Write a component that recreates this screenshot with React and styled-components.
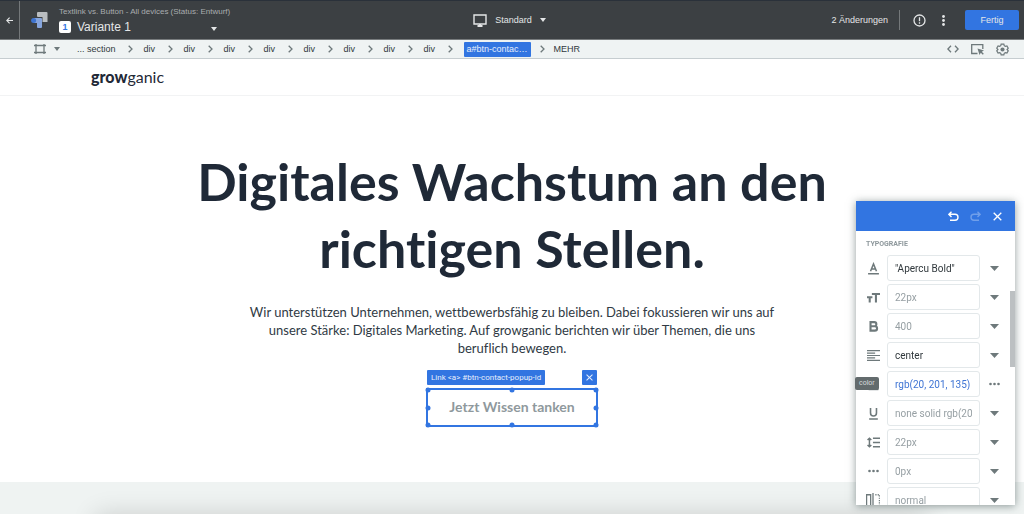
import React from 'react';
import styled, { createGlobalStyle } from 'styled-components';

const blue = '#3275e1';
const dark = '#3c4043';
const ink = '#1f2937';
const grey = '#6e797b';

const GlobalStyle = createGlobalStyle`
	* {
		box-sizing: border-box;
	}
	body {
		margin: 0;
		background: white;
		font-family: "Liberation Sans", Arial, sans-serif;
	}
	button, input {
		font: inherit;
		margin: 0;
	}
	button {
		border: 0;
		padding: 0;
		background: none;
		color: inherit;
		cursor: pointer;
	}
	svg {
		display: block;
		flex: none;
	}
`;

const Page = styled.div`
	display: flex;
	flex-direction: column;
	height: 100vh;
	overflow: hidden;
`;

const TopBar = styled.header`
	display: flex;
	flex: none;
	align-items: stretch;
	height: 40px;
	background: ${dark};
	border-top: 1px solid #2a313a;
	border-bottom: 1px solid #777b7d;
	color: #e4e6e7;
	font-size: 9px;
`;

const Back = styled.button`
	display: flex;
	align-items: center;
	justify-content: center;
	width: 20px;
	height: 100%;
	border-right: 1px solid #74787a;
`;

const TopSide = styled.div`
	display: flex;
	flex: 1;
	align-items: center;
	justify-content: ${({ end }) => end ? 'flex-end' : 'flex-start'};
	padding-right: ${({ end }) => end ? 5 : 0}px;
`;

const Brand = styled.div`
	margin: 0 11px;
`;

const Experiment = styled.div`
	width: 160px;
	padding-top: 3px;
`;

const ExperimentName = styled.div`
	font-size: 8px;
	line-height: 10px;
	color: #a9adaf;
	white-space: nowrap;
`;

const Variant = styled.button`
	display: flex;
	align-items: center;
	width: 100%;
	height: 19px;
	font-size: 12px;

	svg {
		margin: 4px 2px 0 auto;
	}
`;

const VariantNumber = styled.span`
	width: 12px;
	margin-right: 6px;
	border-radius: 2px;
	background: white;
	color: ${blue};
	font-size: 9px;
	font-weight: bold;
	line-height: 12px;
	text-align: center;
`;

const Device = styled.button`
	display: flex;
	align-items: center;
	gap: 8px;
`;

const Changes = styled.span`
	padding-right: 11px;
	margin-right: 13px;
	border-right: 1px solid #74787a;
	line-height: 20px;
`;

const IconButton = styled.button`
	display: flex;
	align-items: center;
	justify-content: center;
	width: ${({ size }) => size || 13}px;
	height: ${({ size }) => size || 13}px;
	opacity: ${({ disabled }) => disabled ? 0.3 : 1};
`;

const TopIcons = styled.div`
	display: flex;
	gap: 11px;
	margin-right: 15px;
`;

const Done = styled.button`
	width: 54px;
	height: 20px;
	border-radius: 2px;
	background: ${blue};
`;

const PathBar = styled.nav`
	display: flex;
	flex: none;
	align-items: center;
	height: 19px;
	padding: 0 15px 0 34px;
	background: #eff3f3;
	border-bottom: 1px solid #c6cdd0;
	color: ${grey};
`;

const Picker = styled.button`
	display: flex;
	align-items: center;
	gap: 8px;
	margin-right: 17px;
`;

const Crumbs = styled.ol`
	display: flex;
	flex: 1;
	align-items: center;
	margin: 0;
	padding: 0;
	list-style: none;
	font-size: 9px;
	line-height: 15px;
	color: #30383c;
`;

const Crumb = styled.li`
	display: flex;
	align-items: center;

	svg {
		margin: ${({ tight }) => tight ? '0 9px' : '0 11px 0 12px'};
	}
`;

const CrumbLink = styled.a`
	min-width: 12px;
	color: ${({ current }) => current ? '#e6eefc' : 'inherit'};
	background: ${({ current }) => current ? blue : 'none'};
	padding: 0 ${({ current }) => current ? 3 : 0}px;
	border-radius: 1px;
	text-decoration: none;
	white-space: nowrap;
`;

const PathTools = styled.div`
	display: flex;
	align-items: center;
	gap: 12px;
`;

const SiteHeader = styled.div`
	flex: none;
	height: 37px;
	padding-left: 91px;
	border-bottom: 1px solid #f2f3f4;
	font-family: Lato, sans-serif;
	font-size: 16px;
	line-height: 35px;
	color: ${ink};

	b {
		font-weight: 900;
	}
	a {
		color: inherit;
		text-decoration: none;
	}
`;

const Hero = styled.main`
	display: flex;
	flex: none;
	flex-direction: column;
	align-items: center;
	padding: 52px 0 56px;
	font-family: Lato, sans-serif;
	font-variant-ligatures: none;
	color: ${ink};
	text-align: center;
`;

const Title = styled.h1`
	max-width: 700px;
	margin: 0 0 21px;
	font-size: 52px;
	font-weight: 700;
	line-height: 67px;
`;

const Intro = styled.p`
	max-width: 534px;
	margin: 0 0 32px;
	font-size: 13px;
	line-height: 18px;
	color: #303a44;
`;

const Selection = styled.div`
	position: relative;
	width: 170px;
	height: 37px;
	border: 1px solid ${blue};
	outline: 1px solid ${blue};
`;

const SelectedLink = styled.a`
	display: block;
	font-size: 14px;
	font-weight: 700;
	line-height: 33px;
	color: #8f999d;
	text-decoration: none;
`;

const Handle = styled.i`
	position: absolute;
	left: ${({ x }) => x}%;
	top: ${({ y }) => y}%;
	width: 5px;
	height: 5px;
	border-radius: 50%;
	background: ${blue};
	transform: translate(-50%, -50%);
`;

const SelectionBar = styled.div`
	position: absolute;
	left: -1px;
	right: -1px;
	bottom: 40px;
	display: flex;
	justify-content: space-between;
	font-family: Roboto, sans-serif;
	font-size: 8px;
	line-height: 15px;
	color: #e6eefc;
`;

const SelectionTag = styled.span`
	padding: 0 4px;
	border-radius: 1px;
	background: ${blue};
	white-space: nowrap;
`;

const Deselect = styled(IconButton)`
	border-radius: 1px;
	background: ${blue};
`;

const NextSection = styled.section`
	flex: 1;
	padding: 33px 96px 0;
	overflow: hidden;
	background: #eff3f2;
`;

const NextCard = styled.div`
	height: 200px;
	background: white;
	box-shadow: 0 0 24px rgba(0, 0, 0, 0.16);
`;

const Panel = styled.aside`
	position: fixed;
	top: 201px;
	right: 9px;
	bottom: 9px;
	width: 159px;
	display: flex;
	flex-direction: column;
	background: white;
	box-shadow: 0 1px 8px rgba(40, 60, 60, 0.5);
	font-family: Roboto, sans-serif;
`;

const PanelHead = styled.div`
	display: flex;
	flex: none;
	align-items: center;
	justify-content: flex-end;
	gap: 9px;
	height: 30px;
	padding-right: 11px;
	background: ${blue};
	color: white;
`;

const PanelBody = styled.div`
	position: relative;
	flex: 1;
	overflow: hidden;
	padding: 8px 10px 0;
`;

const PanelTitle = styled.h2`
	margin: 0 0 6px;
	font-size: 7px;
	font-weight: 700;
	line-height: 10px;
	color: #8e989c;
`;

const Fields = styled.div`
	display: grid;
	gap: 3px;
`;

const Field = styled.div`
	display: grid;
	grid-template-columns: 14px 93px 15px;
	column-gap: 7px;
	align-items: center;
	justify-items: center;
	height: 26px;
	color: ${grey};
`;

const FieldInput = styled.input`
	width: 100%;
	height: 26px;
	padding: 0 7px;
	border: 1px solid #e3e8ea;
	border-radius: 3px;
	outline: 0;
	font-size: 10px;
	color: ${({ tone }) => tone || '#969fa3'};
`;

const Scrollbar = styled.div`
	position: absolute;
	top: 60px;
	right: 0;
	width: 5px;
	height: 76px;
	background: #bcc0c2;
`;

const Tooltip = styled.div`
	position: absolute;
	left: -1px;
	top: 176px;
	padding: 0 4px;
	border-radius: 2px;
	background: #636b6d;
	color: #d5d9da;
	font-size: 7px;
	line-height: 13px;
`;

const Icon = ({ w = 13, h = w, box = '0 0 24 24', stroke = 2, children }) => (
	<svg width={w} height={h} viewBox={box} fill="none" stroke="currentColor" strokeWidth={stroke} aria-hidden="true">
		{children}
	</svg>
);

const Caret = ({ w = 9, h = 5 }) => (
	<svg width={w} height={h} viewBox="0 0 8 4" preserveAspectRatio="none" aria-hidden="true">
		<path d="M0 0h8L4 4z" fill="currentColor" />
	</svg>
);

const Chevron = () => (
	<Icon w={5} h={8} box="0 0 5 8" stroke={1.3}><path d="M.7.7 4 4 .7 7.3" stroke={grey} /></Icon>
);

const Close = ({ w = 9 }) => (
	<Icon w={w} box="0 0 9 9" stroke={1.3}><path d="m.7.7 7.6 7.6M8.3.7.7 8.3" /></Icon>
);

const Dots = () => (
	<svg width="11" height="4" viewBox="0 0 11 4" fill="currentColor" aria-hidden="true">
		<circle cx="1.5" cy="2" r="1.3" />
		<circle cx="5.5" cy="2" r="1.3" />
		<circle cx="9.5" cy="2" r="1.3" />
	</svg>
);

const icons = {
	family: <Icon stroke={2.8}><path d="M2 21.5h20M6.5 17 12 3.5 17.5 17M8.5 13h7" /></Icon>,
	size: <Icon stroke={3.8}><path d="M9 5.5h15M16.5 5.5V21M0 11.5h10M5 11.5V21" /></Icon>,
	weight: <Icon stroke={3.9}><path d="M6.5 4h7a3.7 3.7 0 0 1 0 7.5h-7zM6.5 11.5h8a4 4 0 0 1 0 8.2h-8z" /></Icon>,
	align: <Icon stroke={2.2}><path d="M0 3h24M0 7.5h15M0 12h24M0 16.5h15M0 21h24" /></Icon>,
	color: <Icon stroke={3}><path d="M3 21h18" /></Icon>,
	decoration: <Icon stroke={2.9}><path d="M4 22h16M6.5 2v9a5.5 5.5 0 0 0 11 0V2" /></Icon>,
	lineHeight: <Icon stroke={2.7}><path d="M11 4h13M11 12h13M11 20h13M4.5 4v16M1 7.5 4.5 4 8 7.5M1 16.5 4.5 20 8 16.5" /></Icon>,
	spacing: <Dots />,
	direction: (
		<Icon w={14} stroke={2.2}>
			<path d="M1 23V3h7v20M12 0v24" />
			<path d="M16 3h7v20" strokeDasharray="2 2" />
		</Icon>
	),
};

const fields = [
	{ icon: 'family', label: 'font-family', value: '"Apercu Bold"', tone: '#30383c' },
	{ icon: 'size', label: 'font-size', value: '22px' },
	{ icon: 'weight', label: 'font-weight', value: '400' },
	{ icon: 'align', label: 'text-align', value: 'center', tone: '#30383c' },
	{ icon: 'color', label: 'color', value: 'rgb(20, 201, 135)', tone: '#3f74d4', more: true },
	{ icon: 'decoration', label: 'text-decoration', value: 'none solid rgb(20, 201, 135)' },
	{ icon: 'lineHeight', label: 'line-height', value: '22px' },
	{ icon: 'spacing', label: 'letter-spacing', value: '0px' },
	{ icon: 'direction', label: 'white-space', value: 'normal' },
];

const crumbs = ['... section', 'div', 'div', 'div', 'div', 'div', 'div', 'div', 'div', 'a#btn-contac…', 'MEHR'];
const current = 9;

const handles = [[0, 0], [50, 0], [100, 0], [0, 50], [100, 50], [0, 100], [50, 100], [100, 100]];

const EditorBar = () => (
	<TopBar>
		<TopSide>
			<Back aria-label="Zurück">
				<Icon w={7} box="0 0 7 7" stroke={1.1}><path d="M7 3.5H1M3.6.7.8 3.5l2.8 2.8" /></Icon>
			</Back>
			<Brand>
				<svg width="17" height="17" viewBox="0 0 17 17" aria-hidden="true">
					<path d="M7 0h8.5a1 1 0 0 1 1 1v9h-5V5H7a1 1 0 0 1-1-1V1a1 1 0 0 1 1-1z" fill="#b9bdc0" />
					<path d="M2.5 6H10a1 1 0 0 1 1 1v8a1 1 0 0 1-1 1H7a1 1 0 0 1-1-1v-4H2.5z" fill="#86a5dd" />
					<circle cx="2.6" cy="8.5" r="2.5" fill="#3f74cf" />
				</svg>
			</Brand>
			<Experiment>
				<ExperimentName>Textlink vs. Button - All devices (Status: Entwurf)</ExperimentName>
				<Variant>
					<VariantNumber>1</VariantNumber>
					Variante 1
					<Caret w={6} h={4} />
				</Variant>
			</Experiment>
		</TopSide>
		<Device>
			<Icon w={14} h={13} box="0 0 14 13" stroke={1.4}>
				<path d="M1 1h12v9H1z" />
				<path d="M4.5 12h5M7 10v2" strokeWidth="2" />
			</Icon>
			Standard
			<Caret w={6} h={4} />
		</Device>
		<TopSide end>
			<Changes>2 Änderungen</Changes>
			<TopIcons>
				<IconButton aria-label="Hinweise">
					<Icon w={13} box="0 0 13 13" stroke={1.3}>
						<circle cx="6.5" cy="6.5" r="5.5" />
						<path d="M6.5 3.3v3.9M6.5 8.3v1.4" />
					</Icon>
				</IconButton>
				<IconButton aria-label="Mehr">
					<svg width="3" height="11" viewBox="0 0 3 11" fill="currentColor" aria-hidden="true">
						<circle cx="1.5" cy="1.5" r="1.4" />
						<circle cx="1.5" cy="5.5" r="1.4" />
						<circle cx="1.5" cy="9.5" r="1.4" />
					</svg>
				</IconButton>
			</TopIcons>
			<Done>Fertig</Done>
		</TopSide>
	</TopBar>
);

const ElementPath = () => (
	<PathBar>
		<Picker aria-label="Element auswählen">
			<Icon w={12} h={10} box="0 0 12 10" stroke={1.3}>
				<path d="M2 0v10M10 0v10M0 1.5h12M0 8.5h12" />
			</Icon>
			<Caret w={6} h={4} />
		</Picker>
		<Crumbs>
			{crumbs.map((name, i) => (
				<Crumb key={i} tight={i === current ? 1 : undefined}>
					<CrumbLink href="#" current={i === current ? 1 : undefined}>{name}</CrumbLink>
					{i < crumbs.length - 1 && <Chevron />}
				</Crumb>
			))}
		</Crumbs>
		<PathTools>
			<IconButton aria-label="Code">
				<Icon w={12} h={8} box="0 0 12 8" stroke={1.3}><path d="M4 .7.9 4 4 7.3M8 .7 11.1 4 8 7.3" /></Icon>
			</IconButton>
			<IconButton aria-label="Auswahlmodus">
				<Icon w={13} h={11} box="0 0 13 11" stroke={1.3}>
					<path d="M6.5 9.5H.7V.7h11.1V5" />
					<path d="m6.5 4.5 6.5 2-2.2 1.3 2 2-1 1-2-2L8.5 11z" fill="currentColor" stroke="none" />
				</Icon>
			</IconButton>
			<IconButton aria-label="Einstellungen">
				<Icon w={13} stroke={2.2}>
					<path d="M9.5 2h5l.7 3 2 1.2 3-.9 2.4 4.200-2.2 2.500 2.2 2.500-2.400 4.200-3-.9-2 1.200-.7 3h-5l-.7-3-2-1.200-3 .9-2.400-4.200L3.600 12 1.400 9.500l2.400-4.200 3 .9 2-1.200z" />
					<circle cx="12" cy="12" r="3.8" fill="currentColor" stroke="none" />
				</Icon>
			</IconButton>
		</PathTools>
	</PathBar>
);

const StylePanel = () => (
	<Panel>
		<PanelHead>
			<IconButton aria-label="Rückgängig">
				<Icon w={11} box="0 0 11 11" stroke={1.4}><path d="M3.5.7.9 3.3l2.6 2.6M1 3.3h6a3 3 0 0 1 0 6H2" /></Icon>
			</IconButton>
			<IconButton aria-label="Wiederholen" disabled>
				<Icon w={11} box="0 0 11 11" stroke={1.4}><path d="m7.5.7 2.6 2.6-2.6 2.6M10 3.3H4a3 3 0 0 0 0 6h5" /></Icon>
			</IconButton>
			<IconButton aria-label="Schließen"><Close /></IconButton>
		</PanelHead>
		<PanelBody>
			<PanelTitle>TYPOGRAFIE</PanelTitle>
			<Fields>
				{fields.map(({ icon, label, value, tone, more }) => (
					<Field key={label}>
						<label htmlFor={label} aria-label={label}>{icons[icon]}</label>
						<FieldInput id={label} defaultValue={value} tone={tone} />
						<IconButton aria-label={`${label} Optionen`}>{more ? <Dots /> : <Caret />}</IconButton>
					</Field>
				))}
			</Fields>
			<Scrollbar />
		</PanelBody>
		<Tooltip>color</Tooltip>
	</Panel>
);

export default function App() {
	return (
		<Page>
			<GlobalStyle />
			<EditorBar />
			<ElementPath />
			<SiteHeader>
				<a href="#"><b>grow</b>ganic</a>
			</SiteHeader>
			<Hero>
				<Title>Digitales Wachstum an den richtigen Stellen.</Title>
				<Intro>
					Wir unterstützen Unternehmen, wettbewerbsfähig zu bleiben. Dabei fokussieren wir uns auf
					unsere Stärke: Digitales Marketing. Auf growganic berichten wir über Themen, die uns
					beruflich bewegen.
				</Intro>
				<Selection>
					<SelectionBar>
						<SelectionTag>{'Link <a> #btn-contact-popup-id'}</SelectionTag>
						<Deselect size={15} aria-label="Auswahl aufheben"><Close w={7} /></Deselect>
					</SelectionBar>
					<SelectedLink href="#" id="btn-contact-popup-id">Jetzt Wissen tanken</SelectedLink>
					{handles.map(([x, y]) => <Handle key={`${x}-${y}`} x={x} y={y} />)}
				</Selection>
			</Hero>
			<NextSection>
				<NextCard />
			</NextSection>
			<StylePanel />
		</Page>
	);
}
